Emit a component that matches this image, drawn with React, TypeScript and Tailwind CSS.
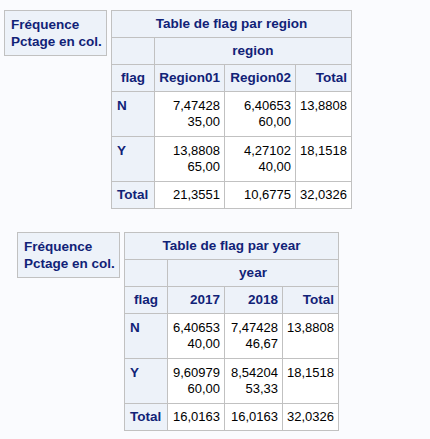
import React from 'react';

type Row = { label: string; cells: string[][] };

type Crosstab = {
  title: string;
  variable: string;
  columns: string[];
  widths: string[];
  rows: Row[];
  total: string[];
};

const tables: Crosstab[] = [
  {
    title: 'Table de flag par region',
    variable: 'region',
    columns: ['Region01', 'Region02', 'Total'],
    widths: ['w-[43px]', 'w-[70px]', 'w-[71px]', 'w-[56px]'],
    rows: [
      { label: 'N', cells: [['7,47428', '35,00'], ['6,40653', '60,00'], ['13,8808']] },
      { label: 'Y', cells: [['13,8808', '65,00'], ['4,27102', '40,00'], ['18,1518']] },
    ],
    total: ['21,3551', '10,6775', '32,0326'],
  },
  {
    title: 'Table de flag par year',
    variable: 'year',
    columns: ['2017', '2018', 'Total'],
    widths: ['w-[43px]', 'w-[57px]', 'w-[58px]', 'w-[56px]'],
    rows: [
      { label: 'N', cells: [['6,40653', '40,00'], ['7,47428', '46,67'], ['13,8808']] },
      { label: 'Y', cells: [['9,60979', '60,00'], ['8,54204', '53,33'], ['18,1518']] },
    ],
    total: ['16,0163', '16,0163', '32,0326'],
  },
];

const head = 'border border-[#c1c1c1] bg-[#edf2f9] text-[#112277] font-bold text-[13.5px] px-[4px]';
const data = 'border border-[#c1c1c1] bg-white text-black text-[13px] px-[4px] text-right';

// Legend box shown left of each table
function Legend() {
  return (
    <div className="w-[103px] h-[46px] border border-[#c1c1c1] bg-[#edf2f9] text-[#112277] font-bold text-[13.5px] leading-[17px] pl-[6px] pt-[5px] whitespace-nowrap">
      <div>Fréquence</div>
      <div>Pctage en col.</div>
    </div>
  );
}

function Table({ t }: { t: Crosstab }) {
  return (
    <table className="table-fixed border-collapse border border-[#c1c1c1] leading-[16px] whitespace-nowrap">
      <colgroup>
        {t.widths.map((w, i) => (
          <col key={i} className={w} />
        ))}
      </colgroup>
      <thead>
        <tr className="h-[27px]">
          <th colSpan={4} className={`${head} text-center align-middle`}>
            {t.title}
          </th>
        </tr>
        <tr className="h-[27px]">
          <th className={head} />
          <th colSpan={3} className={`${head} text-center align-middle`}>
            {t.variable}
          </th>
        </tr>
        <tr className="h-[27px]">
          <th className={`${head} text-center align-middle`}>flag</th>
          {t.columns.map((c) => (
            <th key={c} className={`${head} text-right align-middle`}>
              {c}
            </th>
          ))}
        </tr>
      </thead>
      <tbody>
        {t.rows.map((r) => (
          <tr key={r.label} className="h-[45px]">
            <th className={`${head} text-left align-top pt-[6px] pl-[5px]`}>{r.label}</th>
            {r.cells.map((lines, i) => (
              <td key={i} className={`${data} align-top pt-[6px]`}>
                {lines.map((l, j) => (
                  <div key={j}>{l}</div>
                ))}
              </td>
            ))}
          </tr>
        ))}
        <tr className="h-[27px]">
          <th className={`${head} text-left align-middle pl-[5px]`}>Total</th>
          {t.total.map((v, i) => (
            <td key={i} className={`${data} align-middle`}>
              {v}
            </td>
          ))}
        </tr>
      </tbody>
    </table>
  );
}

export default function App() {
  return (
    <div className="min-h-[439px] bg-[#fafbfe] font-['Liberation_Sans',Arial,sans-serif]">
      <div className="w-[356px] pt-[10px] flex flex-col items-center gap-[23px]">
        {tables.map((t) => (
          <div key={t.title} className="flex items-start gap-[4px]">
            <Legend />
            <Table t={t} />
          </div>
        ))}
      </div>
    </div>
  );
}
